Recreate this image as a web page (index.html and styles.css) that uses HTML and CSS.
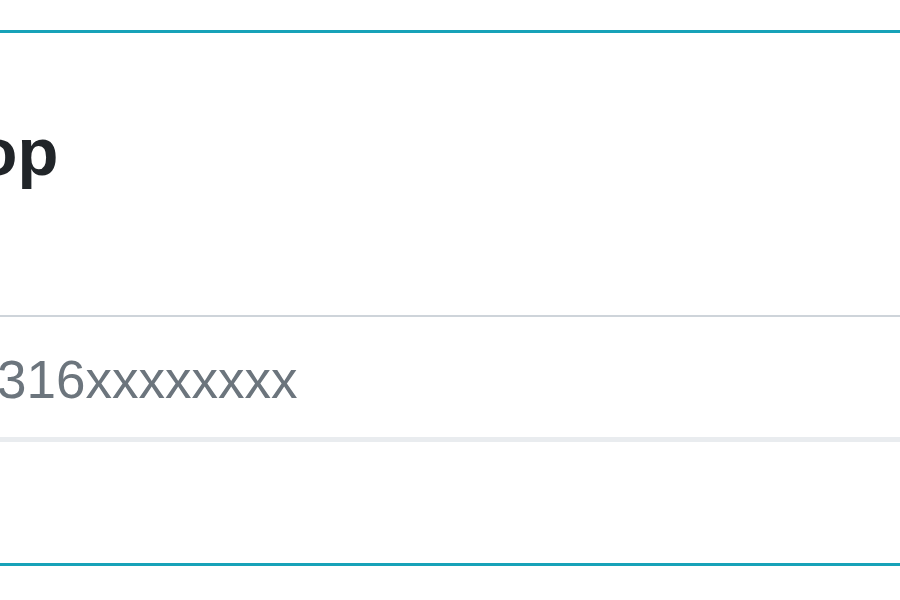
FILE: index.html
```html
<!DOCTYPE html>
<html>
<head>
<meta charset="utf-8">
<link rel="stylesheet" href="styles.css">
</head>
<body>
<div class="card">
  <h2 class="title">Shop</h2>
  <div class="field"><span class="value">316xxxxxxxx</span></div>
  <div class="spacer"></div>
</div>
</body>
</html>
```
FILE: styles.css
```css
html, body {
  margin: 0;
  padding: 0;
  background: #ffffff;
  overflow: hidden;
}
body {
  font-family: "Liberation Sans", Arial, sans-serif;
  width: 900px;
  height: 600px;
}
.card {
  margin-top: 30px;
  border-top: 3px solid #17a2b8;
  border-bottom: 3px solid #17a2b8;
  display: flex;
  flex-direction: column;
}
.title {
  margin: 80px 0 0 -109px;
  font-size: 67px;
  line-height: 77px;
  font-weight: 700;
  color: #212529;
  white-space: nowrap;
}
.field {
  margin-top: 125px;
  border-top: 2px solid #ced4da;
  border-bottom: 5px solid #e9ecef;
  height: 127px;
  display: flex;
  align-items: center;
  padding-top: 6px;
  box-sizing: border-box;
}
.value {
  font-size: 53px;
  line-height: 60px;
  color: #6c757d;
  margin-left: -3px;
  white-space: nowrap;
}
.spacer {
  height: 121px;
}
```
